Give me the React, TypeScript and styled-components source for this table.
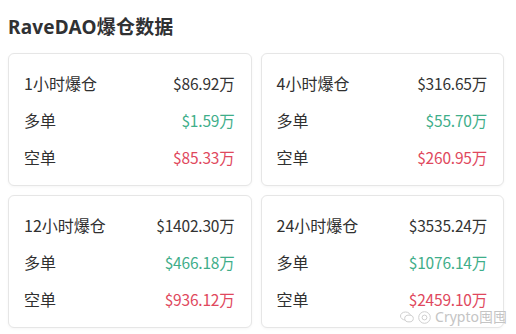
import React from "react";
import styled, { createGlobalStyle } from "styled-components";

const Global = createGlobalStyle`
  html, body { margin: 0; padding: 0; background: #ffffff; }
  body { font-family: "Noto Sans", "Noto Sans CJK SC", sans-serif; color: #333; }
`;

const Page = styled.div`
  position: relative;
  width: 516px;
  height: 334px;
  overflow: hidden;
  padding: 15px 12px 0 8px;
  box-sizing: border-box;
`;

const Title = styled.h1`
  margin: 0 0 14px 0;
  font-family: "Noto Sans", "Noto Sans CJK SC", sans-serif;
  font-size: 19px;
  line-height: 24px;
  font-weight: 700;
  color: #303133;
  letter-spacing: 0.2px;
`;

const Grid = styled.div`
  display: grid;
  grid-template-columns: 1fr 1fr;
  column-gap: 9px;
  row-gap: 9px;
`;

const Card = styled.div`
  border: 1px solid #e6e6e6;
  border-radius: 6px;
  padding: 10px 16px 10px 15px;
  background: #fff;
  box-shadow: 0 1px 3px rgba(0, 0, 0, 0.04);
`;

const Row = styled.div`
  display: flex;
  justify-content: space-between;
  align-items: center;
  height: 37px;
  font-family: "Noto Sans CJK SC", sans-serif;
  font-size: 16px;
`;

const Label = styled.span`
  color: #303030;
`;

const Value = styled.span<{ $tone: "total" | "long" | "short" }>`
  font-size: 15.5px;
  letter-spacing: -0.2px;
  color: ${(p) =>
    p.$tone === "long" ? "#3fae8a" : p.$tone === "short" ? "#e0485d" : "#333"};
`;

const Watermark = styled.div`
  position: absolute;
  right: 9px;
  bottom: 9px;
  display: flex;
  align-items: center;
  gap: 4px;
  color: #c4c4c4;
  font-family: "Noto Sans", "Noto Sans CJK SC", sans-serif;
  font-size: 14px;
  line-height: 16px;
`;

type Item = { title: string; total: string; long: string; short: string };

const data: Item[] = [
  { title: "1小时爆仓", total: "$86.92万", long: "$1.59万", short: "$85.33万" },
  { title: "4小时爆仓", total: "$316.65万", long: "$55.70万", short: "$260.95万" },
  { title: "12小时爆仓", total: "$1402.30万", long: "$466.18万", short: "$936.12万" },
  { title: "24小时爆仓", total: "$3535.24万", long: "$1076.14万", short: "$2459.10万" },
];

export default function App() {
  return (
    <>
      <Global />
      <Page>
        <Title>RaveDAO爆仓数据</Title>
        <Grid>
          {data.map((d) => (
            <Card key={d.title}>
              <Row>
                <Label>{d.title}</Label>
                <Value $tone="total">{d.total}</Value>
              </Row>
              <Row>
                <Label>多单</Label>
                <Value $tone="long">{d.long}</Value>
              </Row>
              <Row>
                <Label>空单</Label>
                <Value $tone="short">{d.short}</Value>
              </Row>
            </Card>
          ))}
        </Grid>
        <Watermark>
          <svg width="14" height="12" viewBox="0 0 14 12" fill="none" stroke="#cfcfcf" strokeWidth="1">
            <ellipse cx="5.5" cy="5" rx="5" ry="4" />
            <ellipse cx="9" cy="7.5" rx="4.3" ry="3.4" fill="#fff" />
          </svg>
          <svg width="13" height="13" viewBox="0 0 13 13" fill="none" stroke="#cfcfcf" strokeWidth="1">
            <circle cx="6.5" cy="6.5" r="5.8" />
            <circle cx="6.5" cy="6.5" r="2.4" />
          </svg>
          <span>Crypto囤囤</span>
        </Watermark>
      </Page>
    </>
  );
}
